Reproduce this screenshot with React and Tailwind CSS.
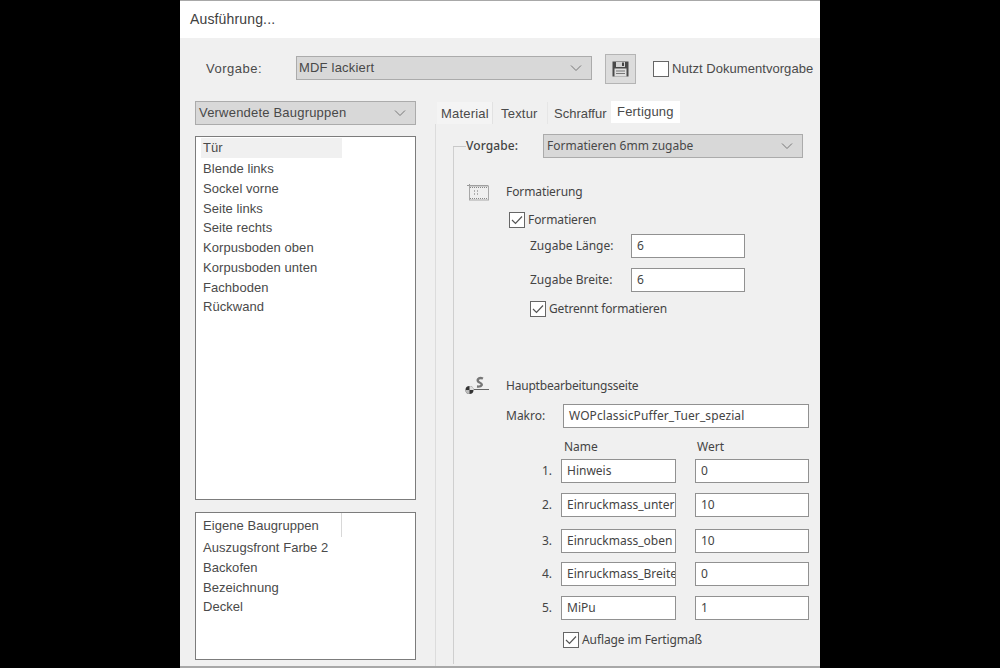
import React from "react";

const sans = "font-['Liberation_Sans','Open_Sans',sans-serif]";
const tahoma = "font-['Noto_Sans','Open_Sans',sans-serif]";

function Chevron() {
  return (
    <svg width="12" height="8" viewBox="0 0 12 8" className="shrink-0" fill="none" stroke="#777" strokeWidth="1">
      <path d="M1 1.5 L6 6.5 L11 1.5" />
    </svg>
  );
}

function Select({ label, className = "", textClass = "" }) {
  return (
    <div className={`flex items-center justify-between shrink-0 bg-[#d8d8d8] border border-[#ababab] pl-[2px] pr-[9px] text-[#484848] ${className}`}>
      <span className={textClass}>{label}</span>
      <Chevron />
    </div>
  );
}

function Check({ checked, className = "" }) {
  return (
    <div className={`w-[16px] h-[16px] shrink-0 bg-white border border-[#666] flex items-center justify-center ${className}`}>
      {checked && (
        <svg width="12" height="10" viewBox="0 0 12 10" fill="none" stroke="#555" strokeWidth="1.2">
          <path d="M1 5 L4.5 8.5 L11 1.5" />
        </svg>
      )}
    </div>
  );
}

function Field({ value, className = "" }) {
  return (
    <div className={`bg-white border border-[#919191] h-[24px] pl-[5px] flex items-center shrink-0 overflow-hidden whitespace-nowrap text-[#444] ${className}`}>
      {value}
    </div>
  );
}

function FormatIcon() {
  return (
    <svg width="22" height="17" viewBox="0 0 22 17" className="shrink-0">
      <path d="M0 1.5 H21 M2.5 0 V16" stroke="#999" strokeWidth="1" />
      <rect x="2.5" y="2" width="19" height="14" fill="#efefef" stroke="#a8a8a8" />
      <path d="M3 3.5 H21 M3 14.5 H21" stroke="#888" strokeWidth="1" strokeDasharray="1 1" />
      <path d="M7 7 H12 M7 10 H12" stroke="#999" strokeWidth="1.5" strokeDasharray="1 2" />
    </svg>
  );
}

function MachineIcon() {
  return (
    <svg width="24" height="20" viewBox="0 0 24 20" className="shrink-0">
      <circle cx="4.5" cy="14" r="4" fill="#333" />
      <path d="M4.5 10 A4 4 0 0 1 8.5 14 H4.5 Z" fill="#ddd" />
      <path d="M0.5 14 A4 4 0 0 0 4.5 18 V14 Z" fill="#bbb" />
      <path d="M9 13.5 H24" stroke="#666" strokeWidth="1" />
      <path d="M18 2.5 C13 0.5 11 5 14.5 6.5 C18 8 17.5 11 12 10.5" fill="none" stroke="#777" strokeWidth="2.4" />
    </svg>
  );
}

function SaveIcon() {
  return (
    <svg width="17" height="16" viewBox="0 0 17 16">
      <path d="M0.5 0.5 H16.5 V15.5 H0.5 Z" fill="#4a4a4a" />
      <rect x="4" y="1" width="9" height="5" fill="#d4d4d4" />
      <rect x="10" y="1.5" width="2" height="3.5" fill="#444" />
      <rect x="2.5" y="7.5" width="12" height="8" fill="#dedede" />
      <path d="M4 10 H13 M4 12.5 H13" stroke="#777" strokeWidth="1" />
    </svg>
  );
}

const used = ["Blende links", "Sockel vorne", "Seite links", "Seite rechts", "Korpusboden oben", "Korpusboden unten", "Fachboden", "Rückwand"];
const own = ["Auszugsfront Farbe 2", "Backofen", "Bezeichnung", "Deckel"];

const rows = [
  { n: "1.", name: "Hinweis", value: "0", mt: "mt-[3px]" },
  { n: "2.", name: "Einruckmass_unter", value: "10", mt: "mt-[10px]" },
  { n: "3.", name: "Einruckmass_oben", value: "10", mt: "mt-[12px]" },
  { n: "4.", name: "Einruckmass_Breite", value: "0", mt: "mt-[9px]" },
  { n: "5.", name: "MiPu", value: "1", mt: "mt-[10px]" },
];

export default function App() {
  return (
    <div className="w-[1000px] h-[668px] bg-black flex justify-center overflow-hidden">
      <div className={`w-[640px] h-[668px] bg-[#f0f0f0] border-t border-b-2 border-[#a8a8a8] flex flex-col ${sans} text-[#4a4a4a]`}>
        <div className="h-[37px] bg-white pl-[10px] flex items-center text-[14px] tracking-[0.15px] text-[#404040] shrink-0">Ausführung...</div>

        <div className="flex items-center h-[30px] mt-[16px] shrink-0">
          <span className="ml-[26px] w-[90px] shrink-0 text-[13px] tracking-[0.5px]">Vorgabe:</span>
          <Select label="MDF lackiert" className="w-[296px] h-[24px] text-[13px] -mt-[2px]" textClass="tracking-[0.2px]" />
          <div className="ml-[13px] w-[31px] h-[30px] shrink-0 bg-[#dcdcdc] border border-[#b4b4b4] flex items-center justify-center">
            <SaveIcon />
          </div>
          <Check className="ml-[17px]" />
          <span className="ml-[3px] text-[13px] tracking-[0.05px] whitespace-nowrap">Nutzt Dokumentvorgabe</span>
        </div>

        <div className="flex mt-[17px] flex-1 min-h-0">
          <div className="ml-[15px] w-[221px] flex flex-col shrink-0">
            <Select label="Verwendete Baugruppen" className="h-[24px] text-[13px] !pl-[3px]" textClass="tracking-[0.2px]" />
            <div className="mt-[11px] h-[364px] bg-white border border-[#7c7c7c] pt-[1px] pl-[5px] text-[13px] tracking-[0.05px] shrink-0">
              <div className="w-[141px] h-[20px] bg-[#f0f0f0] pl-[2px] flex items-center">Tür</div>
              <div className="pt-[1px]">
                {used.map((t) => (
                  <div key={t} className="h-[19.75px] pl-[2px] flex items-center">{t}</div>
                ))}
              </div>
            </div>
            <div className="mt-[12px] h-[148px] bg-white border border-[#7c7c7c] pl-[5px] text-[13px] tracking-[0.05px] shrink-0">
              <div className="w-[141px] h-[24px] pt-[2px] pl-[2px] flex items-center border-r border-[#d8d8d8]">Eigene Baugruppen</div>
              <div className="pt-[1px]">
                {own.map((t) => (
                  <div key={t} className="h-[19.75px] pl-[2px] flex items-center whitespace-nowrap">{t}</div>
                ))}
              </div>
            </div>
          </div>

          <div className="ml-[19px] flex-1 flex flex-col min-w-0">
            <div className="h-[23px] pl-[2px] flex items-end text-[13px] tracking-[0.2px] shrink-0">
              <div className="w-[56px] h-[22px] pt-[2px] pl-[4px] flex items-center bg-[#f4f4f4] border-r border-[#e2e2e2]">Material</div>
              <div className="w-[55px] h-[22px] pt-[2px] pl-[8px] flex items-center border-r border-[#e6e6e6]">Textur</div>
              <div className="w-[63px] h-[22px] pt-[2px] pl-[6px] flex items-center whitespace-nowrap tracking-[0px]">Schraffur</div>
              <div className="w-[69px] h-[22px] self-start bg-white pl-[6px] flex items-center">Fertigung</div>
            </div>
            <div className={`flex-1 border-l border-[#dcdcdc] pl-[17px] ${tahoma} text-[12px] text-[#444]`}>
              <div className="flex items-center h-[24px] mt-[10px]">
                <div className="w-[13px] h-px bg-[#c8c8c8] shrink-0" />
                <span className="w-[77px] shrink-0 font-medium tracking-[0.1px]">Vorgabe:</span>
                <Select label="Formatieren 6mm zugabe" className="w-[260px] h-[24px] !pl-[3px]" />
              </div>
              <div className="-mt-[11px] border-l border-[#cfcfcf] h-[517px] pl-[14px] pt-[36px]">
                <div className="flex items-center h-[18px] -ml-[1px]">
                  <FormatIcon />
                  <span className="ml-[16px] tracking-[-0.1px] pl-[1px]">Formatierung</span>
                </div>
                <div className="flex items-center h-[16px] mt-[11px] ml-[41px]">
                  <Check checked />
                  <span className="ml-[3px] tracking-[-0.1px]">Formatieren</span>
                </div>
                <div className="flex items-center mt-[6px] ml-[62px]">
                  <span className="w-[101px] shrink-0">Zugabe Länge:</span>
                  <Field value="6" className="w-[114px]" />
                </div>
                <div className="flex items-center mt-[10px] ml-[62px]">
                  <span className="w-[101px] shrink-0">Zugabe Breite:</span>
                  <Field value="6" className="w-[114px]" />
                </div>
                <div className="flex items-center h-[16px] mt-[9px] ml-[62px]">
                  <Check checked />
                  <span className="ml-[3px] tracking-[-0.15px]">Getrennt formatieren</span>
                </div>
                <div className="flex items-center h-[20px] mt-[59px] -ml-[3px]">
                  <MachineIcon />
                  <span className="ml-[16px] pl-[1px] tracking-[-0.2px]">Hauptbearbeitungsseite</span>
                </div>
                <div className="flex items-center mt-[8px] ml-[38px]">
                  <span className="w-[57px] shrink-0">Makro:</span>
                  <Field value="WOPclassicPuffer_Tuer_spezial" className="w-[246px] tracking-[0.1px]" />
                </div>
                <div className="flex items-center h-[18px] mt-[10px] ml-[96px]">
                  <span className="w-[133px] shrink-0">Name</span>
                  <span>Wert</span>
                </div>
                {rows.map((r) => (
                  <div key={r.n} className={`flex items-center ${r.mt}`}>
                    <span className="w-[84px] shrink-0 text-right">{r.n}</span>
                    <Field value={r.name} className="ml-[9px] w-[115px]" />
                    <Field value={r.value} className="ml-[19px] w-[114px]" />
                  </div>
                ))}
                <div className="flex items-center h-[16px] mt-[12px] ml-[95px]">
                  <Check checked />
                  <span className="ml-[3px] tracking-[-0.1px]">Auflage im Fertigmaß</span>
                </div>
              </div>
            </div>
          </div>
        </div>
      </div>
    </div>
  );
}
